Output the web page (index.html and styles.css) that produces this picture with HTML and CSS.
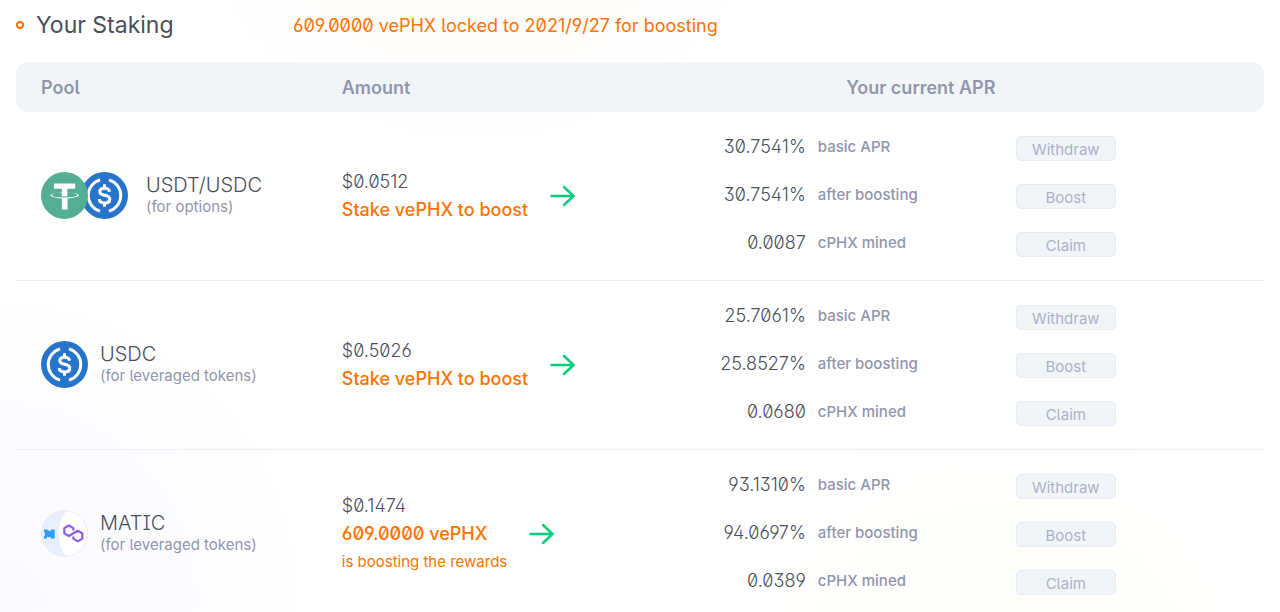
FILE: index.html
```html
<!DOCTYPE html>
<html lang="en">
<head>
    <meta charset="UTF-8">
    <meta name="viewport" content="width=device-width, initial-scale=1.0">
    <title>Your Staking</title>
    <link rel="stylesheet" href="styles.css">
</head>
<body>
    <!-- Shared coin icons -->
    <svg class="sprite" aria-hidden="true">
        <symbol id="usdt" viewBox="0 0 32 32">
            <circle cx="16" cy="16" r="16" fill="#53ae94"/>
            <path fill="#fff" d="M17.9 17.4v-.1c-.1 0-.7.1-1.9.1-1 0-1.700 0-1.900-.1v.1c-3.900-.2-6.700-.8-6.700-1.700s2.900-1.500 6.700-1.700v2.600c.2 0 1 .1 1.900.1 1.200 0 1.800 0 1.900-.1V14c3.900.2 6.700.8 6.700 1.700s-2.900 1.500-6.700 1.700m0-3.600v-2.400h5.400V7.800H8.800v3.600h5.400v2.400c-4.400.2-7.700 1.100-7.700 2.100s3.300 1.900 7.700 2.100v7.600h3.900V18c4.400-.2 7.600-1.100 7.600-2.100s-3.300-1.900-7.600-2.100"/>
        </symbol>
        <symbol id="usdc" viewBox="0 0 32 32">
            <circle cx="16" cy="16" r="16" fill="#2775ca"/>
            <g fill="none" stroke="#fff" stroke-width="2">
                <path d="M13 5.400a11 11 0 0 0 0 21.200M19 5.400a11 11 0 0 1 0 21.200"/>
                <path d="M16 8.300v3M16 20.700v3"/>
                <path stroke-width="2.100" d="M19.400 13.400c-.2-1.500-1.400-2.300-3.300-2.300-2 0-3.300.9-3.300 2.400 0 1.700 1.400 2 3.300 2.400 2.100.4 3.500.9 3.500 2.700 0 1.600-1.500 2.500-3.500 2.500-2.200 0-3.500-.9-3.700-2.600"/>
            </g>
        </symbol>
        <symbol id="matic" viewBox="0 0 48 48">
            <circle cx="24" cy="24" r="23.500" fill="#fff"/>
            <path fill="#e8effc" d="M27 .7A23.500 23.500 0 1 0 27 47.300C15 39 15 9 27 .7"/>
            <circle cx="24" cy="24" r="23.500" fill="none" stroke="#e6e8ee" stroke-width=".8"/>
            <path fill="#2b9df4" d="M3 20h3l4 2v-2h4v9h-4v-2l-2 1-2-1v2H3v-2l1-1v-3l-1-1z"/>
            <path fill="none" stroke="#8f5ae8" stroke-width="2.200" stroke-linejoin="round" d="M33 21v-2.500l-4.600-2.700-4.600 2.700v5.400l4.600 2.700 9.200-5.400 4.600 2.700v5.400l-4.600 2.700-4.600-2.700V27"/>
        </symbol>
        <symbol id="arrow" viewBox="0 0 25 22">
            <path fill="none" stroke="#06cd79" stroke-width="2.500" stroke-linecap="round" stroke-linejoin="round" d="M1.500 11h22M14 2l9.500 9-9.500 9"/>
        </symbol>
    </svg>

    <header class="title-bar">
        <h1>Your Staking</h1>
        <p class="lock-info">609.0000 vePHX locked to 2021/9/27 for boosting</p>
    </header>

    <table class="staking">
        <thead>
            <tr>
                <th class="col-pool">Pool</th>
                <th class="col-amount">Amount</th>
                <th class="col-apr">Your current APR</th>
            </tr>
        </thead>
        <tbody>
            <tr>
                <td>
                    <div class="pool">
                        <div class="coins pair">
                            <svg class="coin"><use href="#usdt"/></svg>
                            <svg class="coin"><use href="#usdc"/></svg>
                        </div>
                        <div>
                            <div class="pool-name">USDT/USDC</div>
                            <div class="pool-note">(for options)</div>
                        </div>
                    </div>
                </td>
                <td>
                    <div class="amount">
                        <div>
                            <div class="value">$0.0512</div>
                            <div class="boost">Stake vePHX to boost</div>
                        </div>
                        <a href="#" class="go" aria-label="Boost USDT/USDC"><svg><use href="#arrow"/></svg></a>
                    </div>
                </td>
                <td>
                    <div class="apr">
                        <span class="num">30.7541%</span><span class="label">basic APR</span><button disabled>Withdraw</button>
                        <span class="num">30.7541%</span><span class="label">after boosting</span><button disabled>Boost</button>
                        <span class="num">0.0087</span><span class="label">cPHX mined</span><button disabled>Claim</button>
                    </div>
                </td>
            </tr>
            <tr>
                <td>
                    <div class="pool">
                        <div class="coins">
                            <svg class="coin"><use href="#usdc"/></svg>
                        </div>
                        <div>
                            <div class="pool-name">USDC</div>
                            <div class="pool-note">(for leveraged tokens)</div>
                        </div>
                    </div>
                </td>
                <td>
                    <div class="amount">
                        <div>
                            <div class="value">$0.5026</div>
                            <div class="boost">Stake vePHX to boost</div>
                        </div>
                        <a href="#" class="go" aria-label="Boost USDC"><svg><use href="#arrow"/></svg></a>
                    </div>
                </td>
                <td>
                    <div class="apr">
                        <span class="num">25.7061%</span><span class="label">basic APR</span><button disabled>Withdraw</button>
                        <span class="num">25.8527%</span><span class="label">after boosting</span><button disabled>Boost</button>
                        <span class="num">0.0680</span><span class="label">cPHX mined</span><button disabled>Claim</button>
                    </div>
                </td>
            </tr>
            <tr>
                <td>
                    <div class="pool">
                        <div class="coins">
                            <svg class="coin"><use href="#matic"/></svg>
                        </div>
                        <div>
                            <div class="pool-name">MATIC</div>
                            <div class="pool-note">(for leveraged tokens)</div>
                        </div>
                    </div>
                </td>
                <td>
                    <div class="amount">
                        <div>
                            <div class="value">$0.1474</div>
                            <div class="boost">609.0000 vePHX</div>
                            <div class="boost-note">is boosting the rewards</div>
                        </div>
                        <a href="#" class="go" aria-label="Boost MATIC"><svg><use href="#arrow"/></svg></a>
                    </div>
                </td>
                <td>
                    <div class="apr">
                        <span class="num">93.1310%</span><span class="label">basic APR</span><button disabled>Withdraw</button>
                        <span class="num">94.0697%</span><span class="label">after boosting</span><button disabled>Boost</button>
                        <span class="num">0.0389</span><span class="label">cPHX mined</span><button disabled>Claim</button>
                    </div>
                </td>
            </tr>
        </tbody>
    </table>
</body>
</html>
```
FILE: styles.css
```css
* { box-sizing: border-box; }
body {
    margin: 0;
    padding: 0 16px;
    font-family: Inter, "Liberation Sans", sans-serif;
    font-feature-settings: "zero", "ss01", "cv05", "cv08";
    color: #4b4e5c;
    background:
        radial-gradient(circle at 0 600px, #f9f9ff, rgba(255, 255, 255, 0) 320px),
        radial-gradient(circle at 480px -160px, #fffcf9, rgba(255, 255, 255, 0) 350px),
        radial-gradient(circle at 1000px 700px, #fffefb, rgba(255, 255, 255, 0) 350px),
        #fff;
}
.sprite { display: none; }

/* Title */
.title-bar { display: flex; align-items: center; height: 62px; padding-bottom: 12px; }
h1 { display: flex; align-items: center; width: 277px; margin: 0; font-size: 23px; font-weight: 400; line-height: 32px; }
h1::before { content: ""; width: 4px; height: 4px; margin-right: 12px; border: 2px solid #ff7300; border-radius: 50%; }
.lock-info { margin: 0; font-size: 18px; color: #ff7300; }

/* Table */
.staking { width: 100%; table-layout: fixed; border-collapse: separate; border-spacing: 0; }
th { height: 50px; padding: 0 0 0 25px; background: #f1f5f8; color: #9195ad; font-size: 18px; font-weight: 600; text-align: left; }
th:first-child { border-radius: 12px 0 0 12px; }
th:last-child { border-radius: 0 12px 12px 0; }
td { padding: 0 0 1px 25px; border-bottom: 1px solid #ebeef2; vertical-align: middle; }
tbody tr:last-child td { border-bottom: 0; }
.col-pool { width: 24.1%; }
.col-amount { width: 20.9%; }
th.col-apr { padding: 0; text-align: center; }
td:last-child { padding: 24px 0 23px; }

.pool { display: flex; align-items: center; }
.coins { display: flex; margin-right: 12px; }
.pair { margin-right: 18px; }
.coin { width: 47px; height: 47px; }
.pair .coin:first-child { position: relative; z-index: 1; }
.pair .coin + .coin { margin-left: -7px; }
.pool-name { font-size: 20px; font-weight: 300; line-height: 22px; }
.pool-note { font-size: 15px; line-height: 22px; color: #9195ad; }

.amount { display: flex; align-items: center; gap: 22px; white-space: nowrap; }
.amount > div { line-height: 28px; }
.value { font-size: 18px; font-weight: 300; }
.boost { font-size: 18px; font-weight: 500; color: #ff7300; }
.boost-note { font-size: 15px; color: #ff7300; }
.go svg { display: block; width: 25px; height: 22px; }

.apr { display: grid; grid-template-columns: 80px 1fr 100px; column-gap: 12px; row-gap: 23px; width: 390px; margin: 0 auto; line-height: 22px; }
.num { display: flex; justify-content: flex-end; font-size: 18px; font-weight: 300; }
.label { font-size: 15px; font-weight: 500; color: #9195ad; }
button { height: 25px; padding: 2px 0 0; border: 1px solid #e8ebf2; border-radius: 5px; background: #f1f5f8; color: #aeb1c8; font: inherit; font-size: 15px; font-feature-settings: inherit; }
```
